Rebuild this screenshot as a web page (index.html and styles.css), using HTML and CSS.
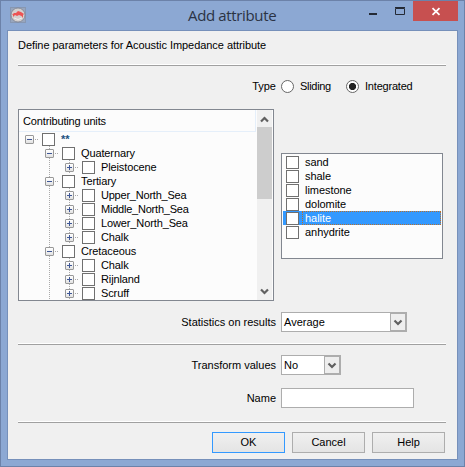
FILE: index.html
```html
<!DOCTYPE html>
<html lang="en">
<head>
<meta charset="utf-8">
<title>Add attribute</title>
<link rel="stylesheet" href="styles.css">
</head>
<body>
<div class="window">
  <header class="titlebar">
    <svg class="app-icon" width="16" height="16" viewBox="0 0 16 16"><rect x=".5" y=".5" width="15" height="15" fill="#98a6bd" stroke="#8797b2"/><circle cx="8" cy="8" r="7" fill="#d4d0cf" stroke="#7e8391" stroke-width=".8"/><path d="M2 8l2-2 2 0 2-2 3 1 3 2-1 1 0 3-1.500-2-2.500-1-2 1-2-1-2 2 0-2z" fill="#ed5454"/><path d="M4 11q4 3 8 0" fill="none" stroke="#f0efec"/></svg>
    <h1 class="title"><span>Add attribute</span></h1>
    <div class="controls">
      <svg class="minmax" width="54" height="20"><path d="M10 13h8" stroke="#242a35" stroke-width="2"/><path d="M36.5 7.500h9v6h-9zM36 6.500h10" fill="none" stroke="#242a35"/></svg>
      <svg class="close" width="45" height="20"><path d="M19.5 7.2l7 6.6M26.5 7.2l-7 6.6" stroke="#fff" stroke-width="1.8"/></svg>
    </div>
  </header>
  <main class="client">
    <p class="intro"><span>Define parameters for Acoustic Impedance attribute</span></p>
    <hr class="rule">
    <div class="types">
      <span class="label">Type</span>
      <span class="radio"></span><span class="sliding">Sliding</span>
      <span class="radio on"></span><span class="integrated">Integrated</span>
    </div>
    <div class="lists">
      <section class="tree">
        <div class="tree-body">
          <div class="tree-head"><span>Contributing units</span></div>
          <div class="node l1"><i class="exp"></i><i class="dots"></i><i class="box"></i><span class="root">**</span></div>
          <div class="branch">
            <div class="node l2"><i class="exp"></i><i class="dots"></i><i class="box"></i><span>Quaternary</span></div>
            <div class="node l3"><i class="exp plus"></i><i class="dots"></i><i class="box"></i><span>Pleistocene</span></div>
            <div class="node l2"><i class="exp"></i><i class="dots"></i><i class="box"></i><span>Tertiary</span></div>
            <div class="node l3"><i class="exp plus"></i><i class="dots"></i><i class="box"></i><span class="sea">Upper_North_Sea</span></div>
            <div class="node l3"><i class="exp plus"></i><i class="dots"></i><i class="box"></i><span class="sea">Middle_North_Sea</span></div>
            <div class="node l3"><i class="exp plus"></i><i class="dots"></i><i class="box"></i><span>Lower_North_Sea</span></div>
            <div class="node l3"><i class="exp plus"></i><i class="dots"></i><i class="box"></i><span>Chalk</span></div>
            <div class="node l2"><i class="exp"></i><i class="dots"></i><i class="box"></i><span>Cretaceous</span></div>
            <div class="node l3"><i class="exp plus"></i><i class="dots"></i><i class="box"></i><span>Chalk</span></div>
            <div class="node l3"><i class="exp plus"></i><i class="dots"></i><i class="box"></i><span>Rijnland</span></div>
            <div class="node l3"><i class="exp plus"></i><i class="dots"></i><i class="box"></i><span>Scruff</span></div>
          </div>
        </div>
        <div class="scrollbar">
          <svg width="15" height="17"><path d="M4 11.5l3.5-3.5 3.5 3.5" fill="none" stroke="#606060" stroke-width="2.2"/></svg>
          <div class="thumb"></div>
          <svg class="down" width="15" height="17"><path d="M4 6.5l3.5 3.5 3.5-3.5" fill="none" stroke="#606060" stroke-width="2.2"/></svg>
        </div>
      </section>
      <section class="liths">
        <div class="lith"><i class="box"></i><span>sand</span></div>
        <div class="lith"><i class="box"></i><span>shale</span></div>
        <div class="lith"><i class="box"></i><span>limestone</span></div>
        <div class="lith"><i class="box"></i><span>dolomite</span></div>
        <div class="lith selected"><i class="box"></i><span>halite</span></div>
        <div class="lith"><i class="box"></i><span>anhydrite</span></div>
      </section>
    </div>
    <div class="field stats"><span class="label">Statistics on results</span>
      <div class="combo wide"><span>Average</span><svg width="16" height="18"><rect x=".5" y="0" width="15" height="18" fill="#eeeeee"/><path d="M.5 0v18M0 .5h16M0 17.5h16M15.5 0v18" stroke="#adadad"/><path d="M4.5 7.5l3.5 3.5 3.5-3.5" fill="none" stroke="#606060" stroke-width="2.2"/></svg></div>
    </div>
    <hr class="rule">
    <div class="field transform"><span class="label">Transform values</span>
      <div class="combo"><span>No</span><svg width="16" height="18"><rect x=".5" y="0" width="15" height="18" fill="#eeeeee"/><path d="M.5 0v18M0 .5h16M0 17.5h16M15.5 0v18" stroke="#adadad"/><path d="M4.5 7.5l3.5 3.5 3.5-3.5" fill="none" stroke="#606060" stroke-width="2.2"/></svg></div>
    </div>
    <div class="field name"><span class="label">Name</span><div class="input"></div></div>
    <hr class="rule">
    <footer class="buttons">
      <button class="default">OK</button><button>Cancel</button><button>Help</button>
    </footer>
  </main>
</div>
</body>
</html>
```
FILE: styles.css
```css
* { box-sizing: border-box; }
body { margin: 0; overflow: hidden; font: 11px/14px "Liberation Sans", Arial, sans-serif; color: #000; }
.window { width: 465px; height: 467px; border: 1px solid #6c82a9; background: #8ca8d3; padding: 0 6px 6px; }
.titlebar { display: flex; height: 29px; align-items: flex-start; }
.app-icon { margin: 6px 0 0 3px; flex: none; }
.title { flex: 1; margin: 2px 0 0 162px; font: 15px/24px "Open Sans", "Noto Sans", sans-serif; color: #2b3344; white-space: nowrap; letter-spacing: -.35px; }
.controls { display: flex; flex: none; }
.close { background: #c75050; }
.client { width: 451px; height: 430px; border: 1px solid #7690ba; background: #f0f0f0; padding: 0 11px 0 10px; display: flex; flex-direction: column; }
.intro { margin: 7px 0 12px; height: 14px; white-space: nowrap; letter-spacing: -.05px; }
.rule { flex: none; width: 428px; height: 2px; margin: 0; border: 0; border-top: 1px solid #fff; background: #a0a0a0; }
.types { display: flex; align-items: center; height: 14px; margin-top: 13px; flex: none; }
.label { width: 258px; text-align: right; margin-right: 5px; white-space: nowrap; }
.radio { width: 13px; height: 13px; border: 1px solid #666; border-radius: 50%; background: #fff; flex: none; }
.types .radio { margin-right: 6px; }
.on { background: radial-gradient(circle, #222 0 3.3px, #fff 3.9px); }
.sliding { width: 46px; letter-spacing: -.3px; }
.integrated { letter-spacing: -.2px; }
.lists { display: flex; gap: 7px; height: 192px; margin-top: 16px; flex: none; }
.tree { display: flex; width: 256px; border: 1px solid #828790; background: #fcfcfc; overflow: hidden; }
.tree-body { width: 238px; height: 190px; overflow: hidden; }
.tree-head { width: 237px; height: 22px; border: solid #e5effa; border-width: 0 1px 1px 0; padding: 4px 0 0 4px; line-height: 14px; letter-spacing: -.15px; }
.node { display: flex; align-items: center; height: 14px; white-space: nowrap; }
.l1 { padding-left: 6px; }
.l2 { padding-left: 26px; }
.l3 { padding-left: 46px; background: repeating-linear-gradient(#aaa 0 1px, transparent 1px 2px) 50px 0 / 1px 100% no-repeat; }
.branch { background: repeating-linear-gradient(#aaa 0 1px, transparent 1px 2px) 30px 0 / 1px 100% no-repeat; }
.exp { width: 9px; height: 9px; margin-top: 1px; flex: none; border: 1px solid #999; border-radius: 1px; background: linear-gradient(#3f5796, #3f5796) 1px 3px / 5px 1px no-repeat, linear-gradient(#fff, #e2e2e2); }
.plus { background: linear-gradient(#3f5796, #3f5796) 1px 3px / 5px 1px no-repeat, linear-gradient(#3f5796, #3f5796) 3px 1px / 1px 5px no-repeat, linear-gradient(#fff, #e2e2e2); }
.dots { width: 8px; height: 1px; margin-top: 1px; background: repeating-linear-gradient(90deg, transparent 0 1px, #aaa 1px 2px) 0 0 / 4px 1px no-repeat; flex: none; }
.box { width: 13px; height: 13px; margin-top: 1px; border: 1px solid #707070; background: #fff; flex: none; }
.node span { margin-left: 6px; letter-spacing: -.12px; }
.node .sea { letter-spacing: -.22px; }
.node .root { color: #205080; font-weight: bold; }
.scrollbar { width: 15px; background: #f0f0f0; display: flex; flex-direction: column; margin-right: 1px; }
.thumb { height: 72px; background: #cdcdcd; }
.down { margin-top: auto; }
.liths { width: 162px; height: 106px; margin-top: 44px; border: 1px solid #828790; background: #fcfcfc; padding: 1px; }
.lith { display: flex; align-items: center; height: 14px; padding-left: 3px; }
.lith span { flex: 1; height: 14px; margin-left: 3px; padding-left: 3px; letter-spacing: -.05px; }
.selected { background: #3399ff; color: #fff; }
.selected span { outline: 1px dotted #b8702c; outline-offset: -1px; }
.field { display: flex; align-items: center; height: 20px; flex: none; }
.stats { margin: 11px 0; }
.transform { margin: 10px 0 13px; }
.name { margin-bottom: 13px; }
.combo { display: flex; width: 60px; height: 20px; border: 1px solid #adadad; background: #fff; justify-content: space-between; line-height: 18px; padding-left: 2px; }
.wide { width: 126px; }
.input { width: 133px; height: 20px; border: 1px solid #adadad; background: #fff; }
.buttons { display: flex; gap: 7px; justify-content: flex-end; padding: 9px 1px 0 0; }
button { width: 73px; height: 21px; padding: 0 0 2px; border: 1px solid #adadad; background: linear-gradient(#f0f0f0, #e4e4e4); font: inherit; color: #000; }
.default { border-color: #3399ff; }
```
